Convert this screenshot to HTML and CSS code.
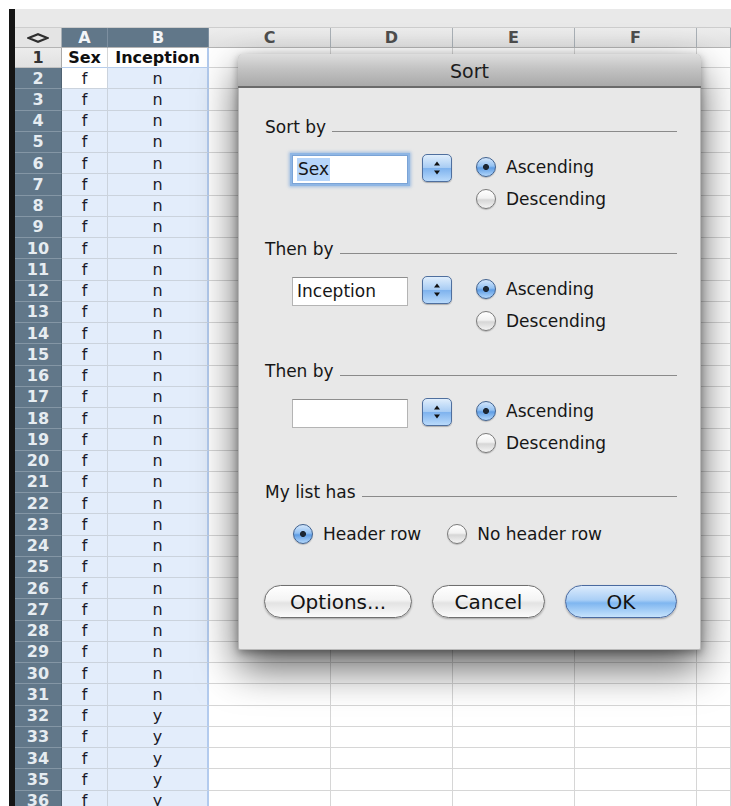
FILE: index.html
```html
<!DOCTYPE html>
<html lang="en">
<head>
<meta charset="utf-8">
<title>Sort</title>
<link rel="stylesheet" href="styles.css">
</head>
<body>
<div class="app">
  <div class="toolbar"></div>
  <div class="sheet">
    <div class="row head">
      <span class="corner"><svg width="22" height="10" viewBox="0 0 22 10"><polygon points="1.5,5 11,1.2 20.5,5 11,8.8" fill="none" stroke="#2e2e2e" stroke-width="2"/></svg></span>
      <span class="colh on">A</span><span class="colh on">B</span><span class="colh">C</span><span class="colh">D</span><span class="colh">E</span><span class="colh">F</span><span class="colh"></span>
    </div>
    <div class="row first">
      <span class="num plain">1</span><span class="hd sel-top">Sex</span><span class="hd sel-top edge">Inception</span><span></span><span></span><span></span><span></span><span></span>
    </div>
    <div class="row"><span class="num">2</span><span class="val act">f</span><span class="val sel edge">n</span><span></span><span></span><span></span><span></span><span></span></div>
    <div class="row"><span class="num">3</span><span class="val sel">f</span><span class="val sel edge">n</span><span></span><span></span><span></span><span></span><span></span></div>
    <div class="row"><span class="num">4</span><span class="val sel">f</span><span class="val sel edge">n</span><span></span><span></span><span></span><span></span><span></span></div>
    <div class="row"><span class="num">5</span><span class="val sel">f</span><span class="val sel edge">n</span><span></span><span></span><span></span><span></span><span></span></div>
    <div class="row"><span class="num">6</span><span class="val sel">f</span><span class="val sel edge">n</span><span></span><span></span><span></span><span></span><span></span></div>
    <div class="row"><span class="num">7</span><span class="val sel">f</span><span class="val sel edge">n</span><span></span><span></span><span></span><span></span><span></span></div>
    <div class="row"><span class="num">8</span><span class="val sel">f</span><span class="val sel edge">n</span><span></span><span></span><span></span><span></span><span></span></div>
    <div class="row"><span class="num">9</span><span class="val sel">f</span><span class="val sel edge">n</span><span></span><span></span><span></span><span></span><span></span></div>
    <div class="row"><span class="num">10</span><span class="val sel">f</span><span class="val sel edge">n</span><span></span><span></span><span></span><span></span><span></span></div>
    <div class="row"><span class="num">11</span><span class="val sel">f</span><span class="val sel edge">n</span><span></span><span></span><span></span><span></span><span></span></div>
    <div class="row"><span class="num">12</span><span class="val sel">f</span><span class="val sel edge">n</span><span></span><span></span><span></span><span></span><span></span></div>
    <div class="row"><span class="num">13</span><span class="val sel">f</span><span class="val sel edge">n</span><span></span><span></span><span></span><span></span><span></span></div>
    <div class="row"><span class="num">14</span><span class="val sel">f</span><span class="val sel edge">n</span><span></span><span></span><span></span><span></span><span></span></div>
    <div class="row"><span class="num">15</span><span class="val sel">f</span><span class="val sel edge">n</span><span></span><span></span><span></span><span></span><span></span></div>
    <div class="row"><span class="num">16</span><span class="val sel">f</span><span class="val sel edge">n</span><span></span><span></span><span></span><span></span><span></span></div>
    <div class="row"><span class="num">17</span><span class="val sel">f</span><span class="val sel edge">n</span><span></span><span></span><span></span><span></span><span></span></div>
    <div class="row"><span class="num">18</span><span class="val sel">f</span><span class="val sel edge">n</span><span></span><span></span><span></span><span></span><span></span></div>
    <div class="row"><span class="num">19</span><span class="val sel">f</span><span class="val sel edge">n</span><span></span><span></span><span></span><span></span><span></span></div>
    <div class="row"><span class="num">20</span><span class="val sel">f</span><span class="val sel edge">n</span><span></span><span></span><span></span><span></span><span></span></div>
    <div class="row"><span class="num">21</span><span class="val sel">f</span><span class="val sel edge">n</span><span></span><span></span><span></span><span></span><span></span></div>
    <div class="row"><span class="num">22</span><span class="val sel">f</span><span class="val sel edge">n</span><span></span><span></span><span></span><span></span><span></span></div>
    <div class="row"><span class="num">23</span><span class="val sel">f</span><span class="val sel edge">n</span><span></span><span></span><span></span><span></span><span></span></div>
    <div class="row"><span class="num">24</span><span class="val sel">f</span><span class="val sel edge">n</span><span></span><span></span><span></span><span></span><span></span></div>
    <div class="row"><span class="num">25</span><span class="val sel">f</span><span class="val sel edge">n</span><span></span><span></span><span></span><span></span><span></span></div>
    <div class="row"><span class="num">26</span><span class="val sel">f</span><span class="val sel edge">n</span><span></span><span></span><span></span><span></span><span></span></div>
    <div class="row"><span class="num">27</span><span class="val sel">f</span><span class="val sel edge">n</span><span></span><span></span><span></span><span></span><span></span></div>
    <div class="row"><span class="num">28</span><span class="val sel">f</span><span class="val sel edge">n</span><span></span><span></span><span></span><span></span><span></span></div>
    <div class="row"><span class="num">29</span><span class="val sel">f</span><span class="val sel edge">n</span><span></span><span></span><span></span><span></span><span></span></div>
    <div class="row"><span class="num">30</span><span class="val sel">f</span><span class="val sel edge">n</span><span></span><span></span><span></span><span></span><span></span></div>
    <div class="row"><span class="num">31</span><span class="val sel">f</span><span class="val sel edge">n</span><span></span><span></span><span></span><span></span><span></span></div>
    <div class="row"><span class="num">32</span><span class="val sel">f</span><span class="val sel edge">y</span><span></span><span></span><span></span><span></span><span></span></div>
    <div class="row"><span class="num">33</span><span class="val sel">f</span><span class="val sel edge">y</span><span></span><span></span><span></span><span></span><span></span></div>
    <div class="row"><span class="num">34</span><span class="val sel">f</span><span class="val sel edge">y</span><span></span><span></span><span></span><span></span><span></span></div>
    <div class="row"><span class="num">35</span><span class="val sel">f</span><span class="val sel edge">y</span><span></span><span></span><span></span><span></span><span></span></div>
    <div class="row"><span class="num">36</span><span class="val sel">f</span><span class="val sel edge">y</span><span></span><span></span><span></span><span></span><span></span></div>
  </div>
</div>

<div class="sort-sheet">
  <div class="titlebar">Sort</div>
  <div class="sheet-body">
    <section class="group">
      <div class="group-head"><span>Sort by</span><span class="rule"></span></div>
      <div class="opts">
        <div class="field focused"><span class="picked">Sex</span></div>
        <div class="stepper"><svg width="30" height="28" viewBox="0 0 30 28"><polygon points="15,7.5 18,11.5 12,11.5" fill="#111"/><polygon points="15,20.5 18,16.5 12,16.5" fill="#111"/></svg></div>
        <div class="radios">
          <div class="radio on"><span class="knob"></span>Ascending</div>
          <div class="radio"><span class="knob"></span>Descending</div>
        </div>
      </div>
    </section>
    <section class="group">
      <div class="group-head"><span>Then by</span><span class="rule"></span></div>
      <div class="opts">
        <div class="field">Inception</div>
        <div class="stepper"><svg width="30" height="28" viewBox="0 0 30 28"><polygon points="15,7.5 18,11.5 12,11.5" fill="#111"/><polygon points="15,20.5 18,16.5 12,16.5" fill="#111"/></svg></div>
        <div class="radios">
          <div class="radio on"><span class="knob"></span>Ascending</div>
          <div class="radio"><span class="knob"></span>Descending</div>
        </div>
      </div>
    </section>
    <section class="group last">
      <div class="group-head"><span>Then by</span><span class="rule"></span></div>
      <div class="opts">
        <div class="field"></div>
        <div class="stepper"><svg width="30" height="28" viewBox="0 0 30 28"><polygon points="15,7.5 18,11.5 12,11.5" fill="#111"/><polygon points="15,20.5 18,16.5 12,16.5" fill="#111"/></svg></div>
        <div class="radios">
          <div class="radio on"><span class="knob"></span>Ascending</div>
          <div class="radio"><span class="knob"></span>Descending</div>
        </div>
      </div>
    </section>
    <section class="list-has">
      <div class="group-head"><span>My list has</span><span class="rule"></span></div>
      <div class="header-opts">
        <div class="radio on"><span class="knob"></span>Header row</div>
        <div class="radio"><span class="knob"></span>No header row</div>
      </div>
    </section>
    <div class="buttons">
      <button class="btn options">Options...</button>
      <button class="btn cancel">Cancel</button>
      <button class="btn ok">OK</button>
    </div>
  </div>
</div>
</body>
</html>
```

FILE: styles.css
```css
html, body {
  margin: 0;
  padding: 0;
}

body {
  width: 731px;
  height: 806px;
  overflow: hidden;
  position: relative;
  background: #fff;
  font-family: "DejaVu Sans", Verdana, sans-serif;
  color: #161616;
}

/* ---------- spreadsheet window ---------- */

.app {
  margin: 9px 0 0 9px;
  height: 797px;
  border-left: 6px solid #141414;
  overflow: hidden;
}

.toolbar {
  height: 18px;
  background: #e9e9e9;
  border-bottom: 1px solid #cdcdcd;
}

.row {
  display: grid;
  grid-template-columns: 47px 46px 101px 122px 122px 122px 122px 1fr;
  height: 21.26px;
}

.row > span {
  box-sizing: border-box;
  display: flex;
  align-items: center;
  justify-content: center;
  border-right: 1px solid #d6d6d6;
  border-bottom: 1px solid #d6d6d6;
  font-size: 16px;
  color: #1a1a2a;
  overflow: hidden;
  white-space: nowrap;
}

.row.head {
  height: 20px;
}

.row.head > span {
  background: linear-gradient(#ededed, #e2e2e2);
  border-right-color: #a9b0b6;
  border-bottom-color: #b4b4b4;
  font-size: 16px;
  font-weight: bold;
  color: #4e4e4e;
}

.row.head > .colh.on {
  background: #617789;
  color: #f2f5f8;
  border-right-color: #7d8fa0;
}

.row.head > .corner {
  background: #e4e4e4;
}

.row.first {
  height: 20px;
}

.row .num {
  background: #617789;
  color: #e6ecf1;
  font-size: 16px;
  font-weight: bold;
  border-right-color: #4f6272;
  border-bottom-color: #8496a5;
}

.row .num.plain {
  background: linear-gradient(#ececec, #e1e1e1);
  color: #333;
  border-right-color: #a9a9a9;
  border-bottom-color: #c2c2c2;
}

.row .hd {
  font-size: 16px;
  font-weight: bold;
  color: #0f0f0f;
}

.row .sel-top {
  border-bottom-color: #b6cdec;
}

.row .sel {
  background: #e3edfb;
  border-right-color: #cbd3dd;
  border-bottom-color: #cbd3dd;
}

.row .act {
  background: #fff;
  border-right-color: #cbd3dd;
  border-bottom-color: #cbd3dd;
}

.row .edge {
  border-right: 2px solid #b3cbee;
}

/* ---------- sort sheet ---------- */

.sort-sheet {
  position: absolute;
  left: 238px;
  top: 54px;
  width: 463px;
  box-sizing: border-box;
  background: #e8e8e8;
  border: 1px solid #b9b9b9;
  border-top: none;
  border-radius: 5px 5px 2px 2px;
  box-shadow: 0 18px 40px rgba(0, 0, 0, 0.62), 0 3px 8px rgba(0, 0, 0, 0.35);
}

.titlebar {
  height: 34px;
  box-sizing: border-box;
  border-bottom: 2px solid #6a6a6a;
  border-radius: 5px 5px 0 0;
  margin: 0 -1px;
  background: linear-gradient(#dedede, #c3c3c3 45%, #a9a9a9);
  text-align: center;
  font-size: 19px;
  line-height: 34px;
  color: #1c1c1c;
}

.sheet-body {
  padding: 29px 23px 31px 26px;
  font-size: 17px;
}

.group {
  margin-bottom: 24px;
}

.group.last {
  margin-bottom: 23px;
}

.group-head {
  display: flex;
  align-items: flex-end;
  height: 20px;
  line-height: 20px;
  white-space: nowrap;
}

.rule {
  flex: 1;
  margin: 0 0 5px 6px;
  border-bottom: 1px solid #8a8a8a;
}

.opts {
  display: flex;
  align-items: flex-start;
  margin: 14px 0 0 27px;
}

.field {
  box-sizing: border-box;
  width: 116px;
  height: 29px;
  margin-top: 4px;
  padding-left: 4px;
  background: #fff;
  border: 1px solid #b4b4b4;
  border-top-color: #8e8e8e;
  line-height: 27px;
  white-space: nowrap;
}

.field.focused {
  border-color: #7aa3d6;
  box-shadow: 0 0 0 2px #8fb6e4, 0 0 3px 3px rgba(110, 160, 220, 0.6);
}

.picked {
  background: #b6d5fa;
  padding: 1px 1px 2px;
}

.stepper {
  box-sizing: border-box;
  width: 30px;
  height: 28px;
  margin: 3px 0 0 14px;
  border: 1px solid #4f6f9e;
  border-radius: 5px;
  background: linear-gradient(#e0eefc, #a9cdf4 48%, #7fb3ee 52%, #b9dafb);
  box-shadow: 0 1px 1px rgba(0, 0, 0, 0.25);
  overflow: hidden;
}

.stepper svg {
  display: block;
  margin: -1px;
}

.radios {
  margin-left: 24px;
}

.radio {
  display: flex;
  align-items: center;
  height: 32px;
  white-space: nowrap;
}

.knob {
  box-sizing: border-box;
  width: 20px;
  height: 20px;
  margin-right: 10px;
  border-radius: 50%;
  border: 1px solid #7b7b7b;
  background: linear-gradient(#ffffff, #f1f1f1 45%, #d6d6d6 55%, #f4f4f4);
  box-shadow: 0 1px 1px rgba(0, 0, 0, 0.2);
}

.radio.on .knob {
  border-color: #41628f;
  background:
    radial-gradient(circle, #1c2734 0 2.6px, rgba(28, 39, 52, 0) 3.4px),
    linear-gradient(#d3e6fb, #93c1f2 45%, #5f9de4 55%, #b3d7fb);
}

.list-has .header-opts {
  display: flex;
  margin: 16px 0 0 28px;
}

.header-opts .radio {
  margin-right: 26px;
}

.buttons {
  display: flex;
  gap: 20px;
  margin: 35px 0 0 -1px;
}

.btn {
  box-sizing: border-box;
  height: 33px;
  padding: 0;
  border: 1px solid #6f6f6f;
  border-radius: 17px;
  background: linear-gradient(#ffffff, #f4f4f4 45%, #e3e3e3 55%, #fbfbfb);
  box-shadow: 0 1px 2px rgba(0, 0, 0, 0.3);
  font-family: "DejaVu Sans", Verdana, sans-serif;
  font-size: 20px;
  color: #121212;
}

.btn.options {
  width: 148px;
}

.btn.cancel {
  width: 113px;
}

.btn.ok {
  width: 112px;
  border-color: #4a6aa0;
  background: linear-gradient(#dcebfc, #aacff6 45%, #7fb6f0 55%, #c6e3fc);
}
```
